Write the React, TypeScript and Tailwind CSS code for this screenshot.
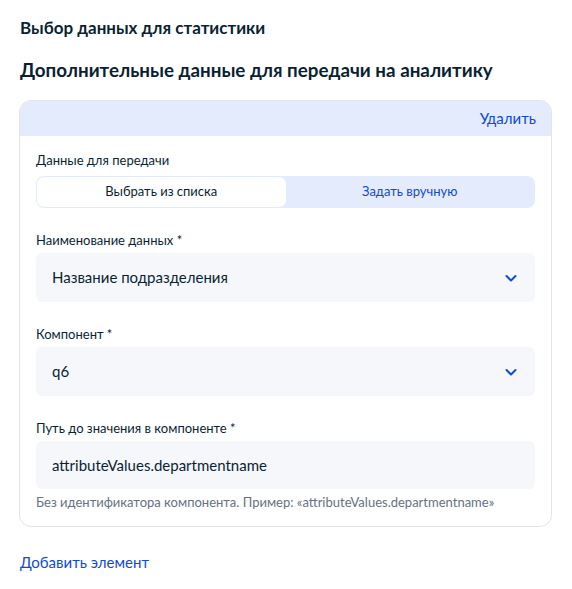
import React, { useState } from 'react';

const font = { fontFamily: 'Lato, "Noto Sans", sans-serif' };

function Chevron() {
  return (
    <svg width="14" height="14" viewBox="0 0 14 14" fill="none">
      <path d="M2.5 5L7 9.5L11.5 5" stroke="#0d4cd3" strokeWidth="2" strokeLinecap="round" strokeLinejoin="round" />
    </svg>
  );
}

function Select({ value }: { value: string }) {
  return (
    <div className="flex h-[49px] items-center justify-between rounded-md bg-[#f5f7fa] pl-4 pr-[17px]">
      <span className="text-[15px] text-[#0b1f33]">{value}</span>
      <Chevron />
    </div>
  );
}

export default function App() {
  const [mode, setMode] = useState<'list' | 'manual'>('list');

  return (
    <div className="min-h-[589px] bg-white pl-[19px] pr-5 pt-[18px]" style={font}>
      <h1 className="pl-px text-[17px] font-bold leading-5 text-[#0b1f33]">Выбор данных для статистики</h1>
      <h2 className="mt-5 pl-px text-[18.8px] font-bold leading-6 text-[#0b1f33]">
        Дополнительные данные для передачи на аналитику
      </h2>

      <div className="mt-[18px] overflow-hidden rounded-xl border border-[#e1e4ea]">
        <div className="-mx-px -mt-px flex h-9 items-center justify-end bg-[#e4ebfd] pr-4">
          <button className="text-[15px] text-[#0d4cd3]">Удалить</button>
        </div>

        <div className="px-4 pb-4 pt-4">
          <div className="mb-2 text-[13px] leading-4 text-[#0b1f33]">Данные для передачи</div>
          <div className="flex h-8 rounded-lg bg-[#e4ebfd] p-px">
            <button
              onClick={() => setMode('list')}
              className={`flex-1 rounded-[7px] text-[13px] ${
                mode === 'list' ? 'bg-white text-[#0b1f33]' : 'text-[#0d4cd3]'
              }`}
            >
              Выбрать из списка
            </button>
            <button
              onClick={() => setMode('manual')}
              className={`flex-1 rounded-[7px] text-[13px] ${
                mode === 'manual' ? 'bg-white text-[#0b1f33]' : 'text-[#0d4cd3]'
              }`}
            >
              Задать вручную
            </button>
          </div>

          <div className="mb-[5px] mt-6 text-[13px] leading-4 text-[#0b1f33]">Наименование данных *</div>
          <Select value="Название подразделения" />

          <div className="mb-[5px] mt-6 text-[13px] leading-4 text-[#0b1f33]">Компонент *</div>
          <Select value="q6" />

          <div className="mb-[5px] mt-6 text-[13px] leading-4 text-[#0b1f33]">Путь до значения в компоненте *</div>
          <div className="flex h-12 items-center rounded-md bg-[#f5f7fa] pl-4">
            <span className="text-[15px] text-[#0b1f33]">attributeValues.departmentname</span>
          </div>
          <div className="mt-[5px] text-[13px] leading-4 text-[#66727f]">
            Без идентификатора компонента. Пример: «attributeValues.departmentname»
          </div>
        </div>
      </div>

      <button className="mt-[25px] pl-px text-[15px] leading-5 text-[#0d4cd3]">Добавить элемент</button>
    </div>
  );
}
